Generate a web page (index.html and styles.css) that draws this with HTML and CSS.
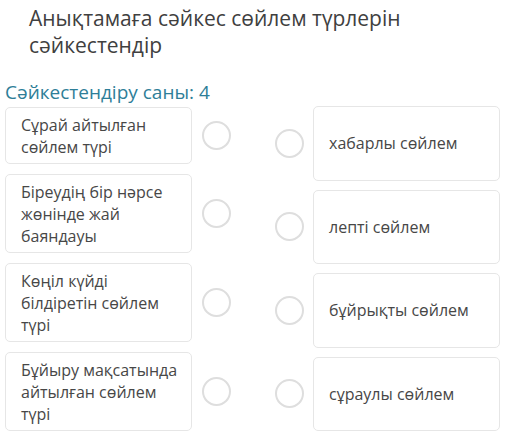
FILE: index.html
```html
<!DOCTYPE html>
<html lang="kk">
<head>
<meta charset="utf-8">
<title>Сәйкестендіру</title>
<link rel="stylesheet" href="styles.css">
</head>
<body>
<div class="page">
  <h1 class="title">Анықтамаға сәйкес сөйлем түрлерін сәйкестендір</h1>
  <div class="count">Сәйкестендіру саны: 4</div>
  <div class="match">
    <div class="col col-left">
      <div class="row">
        <div class="card">Сұрай айтылған сөйлем түрі</div>
        <span class="dot"></span>
      </div>
      <div class="row">
        <div class="card">Біреудің бір нәрсе жөнінде жай баяндауы</div>
        <span class="dot"></span>
      </div>
      <div class="row">
        <div class="card">Көңіл күйді білдіретін сөйлем түрі</div>
        <span class="dot"></span>
      </div>
      <div class="row">
        <div class="card">Бұйыру мақсатында айтылған сөйлем түрі</div>
        <span class="dot"></span>
      </div>
    </div>
    <div class="col col-right">
      <div class="row row-r">
        <span class="dot"></span>
        <div class="card card-r">хабарлы сөйлем</div>
      </div>
      <div class="row row-r">
        <span class="dot"></span>
        <div class="card card-r">лепті сөйлем</div>
      </div>
      <div class="row row-r">
        <span class="dot"></span>
        <div class="card card-r">бұйрықты сөйлем</div>
      </div>
      <div class="row row-r">
        <span class="dot"></span>
        <div class="card card-r">сұраулы сөйлем</div>
      </div>
    </div>
  </div>
</div>
</body>
</html>
```
FILE: styles.css
```css
* { box-sizing: border-box; }
html, body {
  margin: 0;
  padding: 0;
  background: #ffffff;
}
body {
  font-family: "Open Sans", "Noto Sans", "DejaVu Sans", sans-serif;
  color: #444444;
}
.page {
  padding: 5px 0 0 5px;
  width: 525px;
}
.title {
  margin: 0 0 0 24px;
  font-size: 21px;
  font-weight: 400;
  line-height: 27px;
  color: #404040;
  width: 400px;
}
.count {
  margin-top: 20px;
  font-size: 19px;
  line-height: 26px;
  color: #2e7e98;
}
.match {
  display: flex;
  align-items: stretch;
  margin-top: 2px;
}
.col {
  display: flex;
  flex-direction: column;
}
.col-left {
  gap: 10px;
}
.col-right {
  gap: 9px;
  margin-left: 25px;
  margin-top: -1px;
}
.row {
  display: flex;
  align-items: center;
}
.row-r {
  flex: 1;
  align-items: stretch;
}
.row-r .dot {
  align-self: center;
}
.card {
  width: 187px;
  border: 1px solid #e6e6e6;
  border-radius: 5px;
  padding: 5.5px 10px 5.5px 15px;
  font-size: 16px;
  line-height: 22px;
  color: #474747;
  background: #fff;
}
.card-r {
  display: flex;
  align-items: center;
  padding: 0 10px 0 15px;
}
.dot {
  width: 29px;
  height: 29px;
  border: 2px solid #dedede;
  border-radius: 50%;
  margin: 0 9.5px;
  flex: none;
}
```
